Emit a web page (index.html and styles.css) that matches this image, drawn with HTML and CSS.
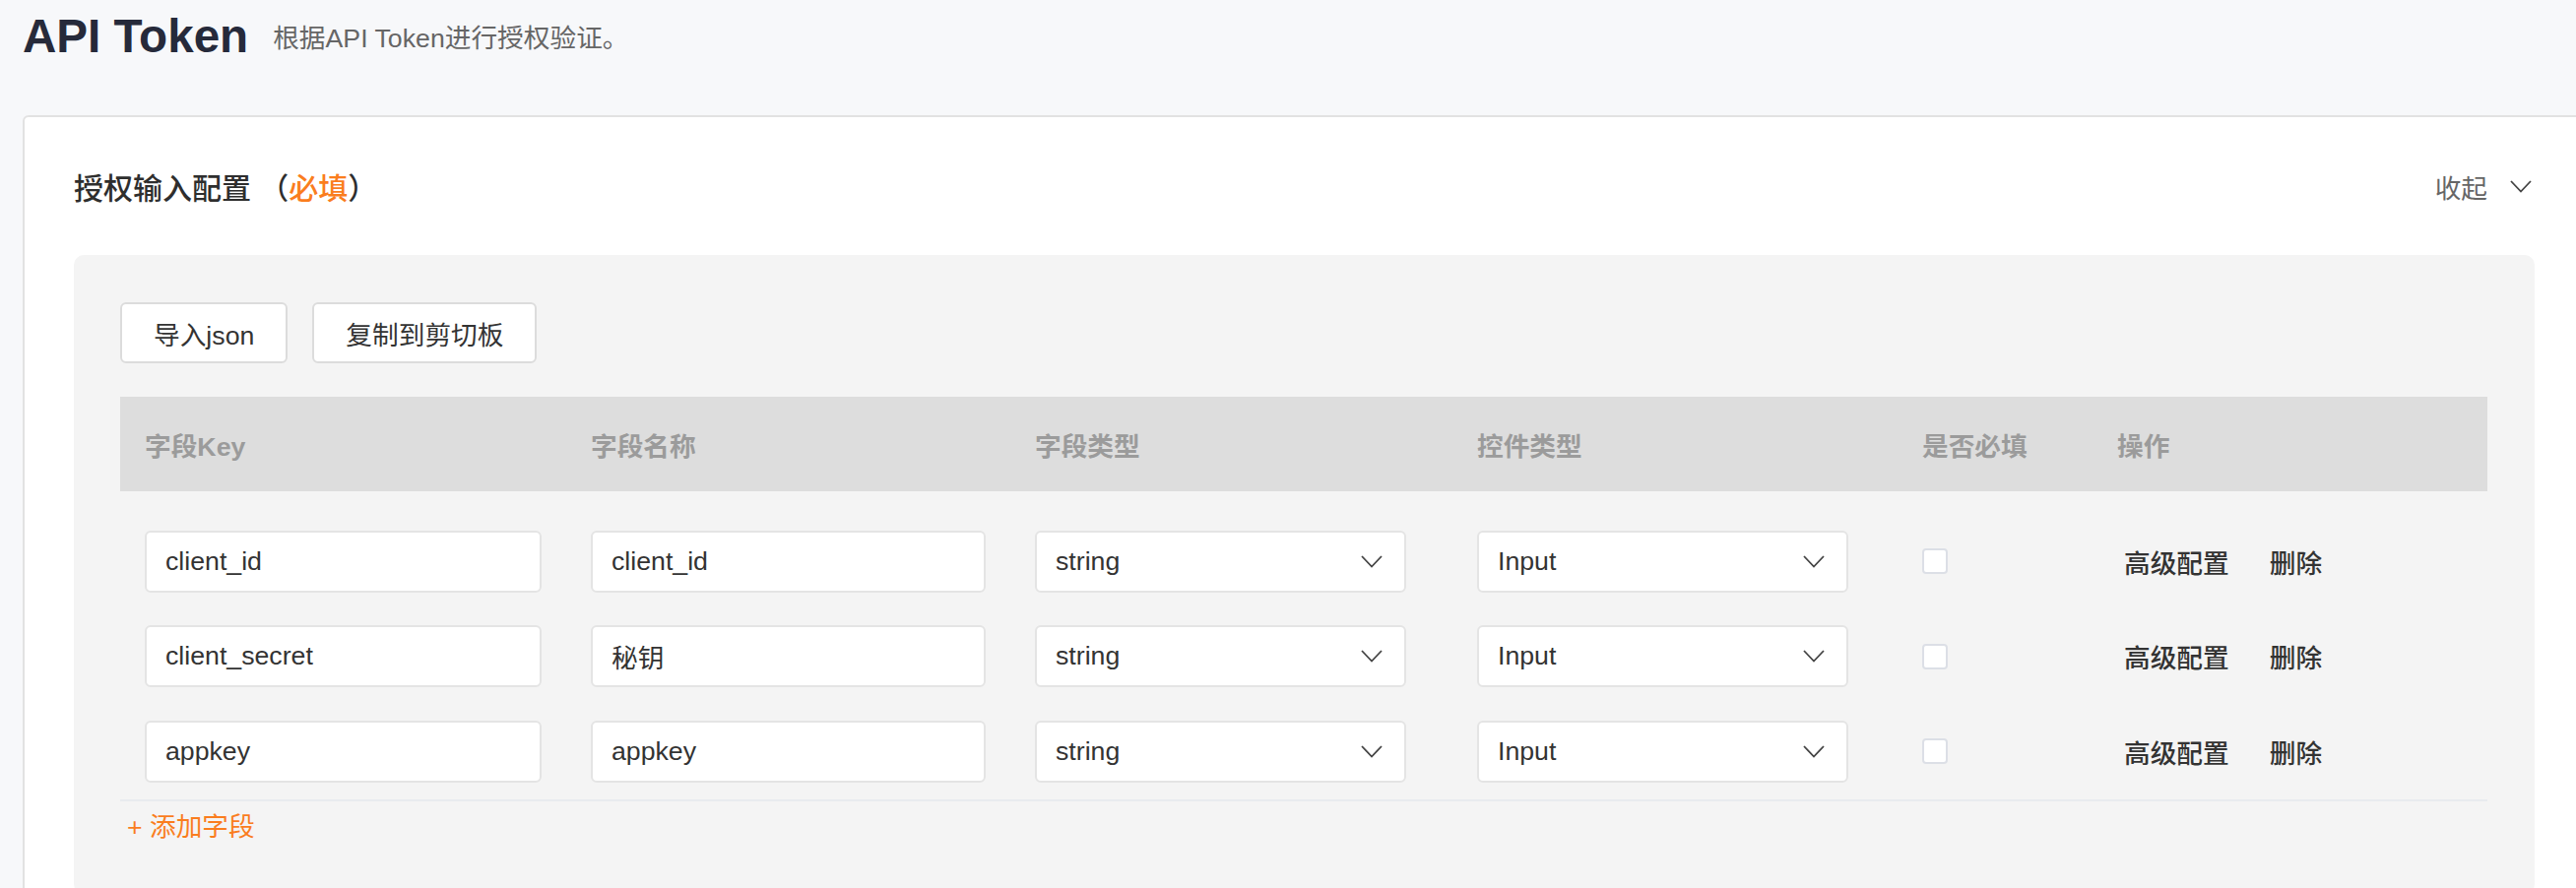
FILE: index.html
```html
<!DOCTYPE html>
<html lang="zh-CN">
<head>
    <meta charset="UTF-8">
    <meta name="viewport" content="width=device-width, initial-scale=1.0">
    <title>API Token - 授权配置</title>
    <link rel="stylesheet" href="styles.css">
</head>
<body>
    <div class="page-head">
        <h1>API Token</h1>
        <span class="page-desc">根据API Token进行授权验证。</span>
    </div>

    <div class="card">
        <div class="card-header">
            <div class="card-title">授权输入配置 （<span class="required">必填</span>）</div>
            <div class="collapse">
                <span>收起</span>
                <svg class="chevron" viewBox="0 0 22 13" width="22" height="13">
                    <polyline points="1,1 11,11.5 21,1" />
                </svg>
            </div>
        </div>

        <div class="panel">
            <div class="toolbar">
                <button class="btn">导入json</button>
                <button class="btn">复制到剪切板</button>
            </div>

            <div class="field-table">
                <div class="table-head">
                    <div class="cell">字段Key</div>
                    <div class="cell">字段名称</div>
                    <div class="cell">字段类型</div>
                    <div class="cell">控件类型</div>
                    <div class="cell">是否必填</div>
                    <div class="cell">操作</div>
                </div>

                <div class="table-body">
                    <div class="table-row">
                        <div class="cell"><input class="text-input" type="text" value="client_id"></div>
                        <div class="cell"><input class="text-input" type="text" value="client_id"></div>
                        <div class="cell">
                            <div class="select">
                                <span>string</span>
                                <svg class="chevron" viewBox="0 0 22 13" width="22" height="13"><polyline points="1,1 11,11.5 21,1" /></svg>
                            </div>
                        </div>
                        <div class="cell">
                            <div class="select">
                                <span>Input</span>
                                <svg class="chevron" viewBox="0 0 22 13" width="22" height="13"><polyline points="1,1 11,11.5 21,1" /></svg>
                            </div>
                        </div>
                        <div class="cell"><span class="checkbox"></span></div>
                        <div class="cell actions">
                            <a class="action-link">高级配置</a>
                            <a class="action-link">删除</a>
                        </div>
                    </div>

                    <div class="table-row">
                        <div class="cell"><input class="text-input" type="text" value="client_secret"></div>
                        <div class="cell"><input class="text-input" type="text" value="秘钥"></div>
                        <div class="cell">
                            <div class="select">
                                <span>string</span>
                                <svg class="chevron" viewBox="0 0 22 13" width="22" height="13"><polyline points="1,1 11,11.5 21,1" /></svg>
                            </div>
                        </div>
                        <div class="cell">
                            <div class="select">
                                <span>Input</span>
                                <svg class="chevron" viewBox="0 0 22 13" width="22" height="13"><polyline points="1,1 11,11.5 21,1" /></svg>
                            </div>
                        </div>
                        <div class="cell"><span class="checkbox"></span></div>
                        <div class="cell actions">
                            <a class="action-link">高级配置</a>
                            <a class="action-link">删除</a>
                        </div>
                    </div>

                    <div class="table-row">
                        <div class="cell"><input class="text-input" type="text" value="appkey"></div>
                        <div class="cell"><input class="text-input" type="text" value="appkey"></div>
                        <div class="cell">
                            <div class="select">
                                <span>string</span>
                                <svg class="chevron" viewBox="0 0 22 13" width="22" height="13"><polyline points="1,1 11,11.5 21,1" /></svg>
                            </div>
                        </div>
                        <div class="cell">
                            <div class="select">
                                <span>Input</span>
                                <svg class="chevron" viewBox="0 0 22 13" width="22" height="13"><polyline points="1,1 11,11.5 21,1" /></svg>
                            </div>
                        </div>
                        <div class="cell"><span class="checkbox"></span></div>
                        <div class="cell actions">
                            <a class="action-link">高级配置</a>
                            <a class="action-link">删除</a>
                        </div>
                    </div>
                </div>
            </div>

            <a class="add-field">+ 添加字段</a>
        </div>
    </div>
</body>
</html>
```

FILE: styles.css
```css
html, body {
    overflow: hidden;
}
body {
    margin: 0;
    background: #f7f8fa;
    font-family: "Liberation Sans", "Noto Sans CJK SC", sans-serif;
    font-size: 26.7px;
    color: #333;
}
.page-head {
    display: flex;
    align-items: center;
    height: 74px;
    padding-left: 23px;
}
.page-head h1 {
    margin: 0;
    font-size: 47.6px;
    line-height: 74px;
    font-weight: bold;
    color: #262a3a;
}
.page-desc {
    margin-left: 25px;
    margin-top: 3px;
    line-height: 40px;
    color: #666;
}
.card {
    margin: 43px -10px 0 23px;
    padding: 50px;
    background: white;
    border: 2px solid #e2e2e2;
    border-radius: 6px;
}
.card-header {
    display: flex;
    justify-content: space-between;
    align-items: center;
    height: 40px;
    margin-bottom: 50px;
}
.card-title {
    font-size: 30px;
    font-weight: 500;
    color: #2e2e2e;
}
.required {
    color: #fa7d1e;
}
.collapse {
    display: flex;
    align-items: center;
    color: #666;
}
.collapse .chevron {
    margin-left: 23px;
    margin-right: 3px;
}
.chevron {
    width: 22px;
    height: 13px;
}
.chevron polyline {
    fill: none;
    stroke: #444;
    stroke-width: 1.8;
}
.panel {
    background: #f4f4f4;
    border-radius: 10px;
    padding: 48px 48px 48px 47px;
}
.toolbar {
    display: flex;
    gap: 25px;
    margin-bottom: 34px;
}
.btn {
    height: 62px;
    padding: 0 32px;
    background: white;
    border: 2px solid #dcdcdc;
    border-radius: 6px;
    font: inherit;
    color: #333;
}
.table-head,
.table-row {
    display: grid;
    grid-template-columns: 453px 451px 449px 452px 198px 1fr;
    align-items: center;
}
.table-head {
    height: 96px;
    background: #dddddd;
    color: #9b9b9b;
    font-weight: bold;
}
.cell {
    padding: 0 25px;
}
.table-body {
    padding-top: 23px;
    border-bottom: 2px solid #e8ebef;
}
.table-row {
    height: 96.5px;
}
.text-input {
    box-sizing: border-box;
    width: 100%;
    height: 63px;
    padding: 0 19px;
    background: white;
    border: 2px solid #e4e4e4;
    border-radius: 6px;
    font: inherit;
    color: #333;
    outline: none;
}
.select {
    box-sizing: border-box;
    display: flex;
    justify-content: space-between;
    align-items: center;
    width: 377px;
    height: 63px;
    padding: 0 22px 0 19px;
    background: white;
    border: 2px solid #e4e4e4;
    border-radius: 6px;
}
.checkbox {
    display: block;
    box-sizing: border-box;
    width: 26px;
    height: 26px;
    background: white;
    border: 2px solid #dcdfe6;
    border-radius: 4px;
}
.actions {
    display: flex;
    gap: 41px;
    padding-left: 32px;
}
.action-link {
    color: #333;
    font-weight: 500;
    cursor: pointer;
}
.add-field {
    display: inline-block;
    margin-top: 6px;
    padding-left: 7px;
    line-height: 40px;
    color: #fa7d1e;
    cursor: pointer;
}
```
